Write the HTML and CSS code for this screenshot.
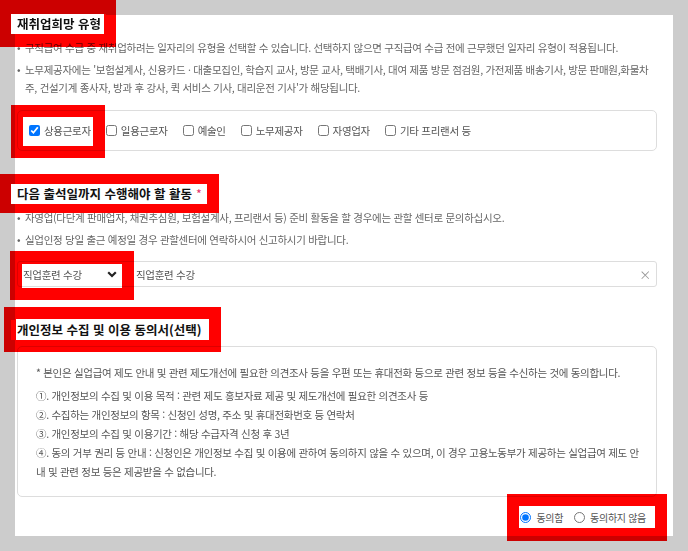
FILE: index.html
```html
<!DOCTYPE html>
<html lang="ko">
<head>
    <meta charset="UTF-8">
    <meta name="viewport" content="width=device-width, initial-scale=1.0">
    <title>재취업희망 유형</title>
    <link rel="stylesheet" href="styles.css">
</head>
<body>
    <div class="panel">
        <h2 class="sect-title hl hl-type">재취업희망 유형</h2>
        <ul class="notes">
            <li>구직급여 수급 중 재취업하려는 일자리의 유형을 선택할 수 있습니다. 선택하지 않으면 구직급여 수급 전에 근무했던 일자리 유형이 적용됩니다.</li>
            <li>노무제공자에는 '보험설계사, 신용카드 · 대출모집인, 학습지 교사, 방문 교사, 택배기사, 대여 제품 방문 점검원, 가전제품 배송기사, 방문 판매원,화물차주, 건설기계 종사자, 방과 후 강사, 퀵 서비스 기사, 대리운전 기사'가 해당됩니다.</li>
        </ul>
        <div class="check-box">
            <label class="check hl hl-check"><input type="checkbox" checked>상용근로자</label>
            <label class="check"><input type="checkbox">일용근로자</label>
            <label class="check"><input type="checkbox">예술인</label>
            <label class="check"><input type="checkbox">노무제공자</label>
            <label class="check"><input type="checkbox">자영업자</label>
            <label class="check"><input type="checkbox">기타 프리랜서 등</label>
        </div>

        <h2 class="sect-title sect-gap hl hl-activity">다음 출석일까지 수행해야 할 활동<span class="req">*</span></h2>
        <ul class="notes">
            <li>자영업(다단계 판매업자, 채권추심원, 보험설계사, 프리랜서 등) 준비 활동을 할 경우에는 관할 센터로 문의하십시오.</li>
            <li>실업인정 당일 출근 예정일 경우 관할센터에 연락하시어 신고하시기 바랍니다.</li>
        </ul>
        <div class="field">
            <div class="select hl hl-select">
                <span>직업훈련 수강</span>
                <svg width="10" height="7" viewBox="0 0 10 7"><path d="M1.2 1.2L5 5l3.8-3.8" fill="none" stroke="#222" stroke-width="2.2"/></svg>
            </div>
            <div class="field-input">
                <span>직업훈련 수강</span>
                <span class="clear">×</span>
            </div>
        </div>

        <h2 class="sect-title sect-gap hl hl-consent">개인정보 수집 및 이용 동의서(선택)</h2>
        <div class="consent">
            <p>* 본인은 실업급여 제도 안내 및 관련 제도개선에 필요한 의견조사 등을 우편 또는 휴대전화 등으로 관련 정보 등을 수신하는 것에 동의합니다.</p>
            <ol class="terms">
                <li>①. 개인정보의 수집 및 이용 목적 : 관련 제도 홍보자료 제공 및 제도개선에 필요한 의견조사 등</li>
                <li>②. 수집하는 개인정보의 항목 : 신청인 성명, 주소 및 휴대전화번호 등 연락처</li>
                <li>③. 개인정보의 수집 및 이용기간 : 해당 수급자격 신청 후 3년</li>
                <li>④. 동의 거부 권리 등 안내 : 신청인은 개인정보 수집 및 이용에 관하여 동의하지 않을 수 있으며, 이 경우 고용노동부가 제공하는 실업급여 제도 안내 및 관련 정보 등은 제공받을 수 없습니다.</li>
            </ol>
        </div>
        <div class="agree-row">
            <div class="radios hl hl-radio">
                <label class="radio"><input type="radio" name="agree" checked>동의함</label>
                <label class="radio"><input type="radio" name="agree">동의하지 않음</label>
            </div>
        </div>
    </div>
</body>
</html>
```

FILE: styles.css
```css
*{
    margin: 0;
    padding: 0;
    box-sizing: border-box;
}
html{
    background-color: #ccc;
}
body{
    background-color: #ccc;
    padding: 15px;
    font-family: "Noto Sans CJK KR", "Noto Sans", sans-serif;
    font-size: 10.5px;
    letter-spacing: -0.3px;
    color: #666;
}
.panel{
    display: flow-root;
    background-color: #fff;
    height: 521px;
    padding: 0 16px 0 2px;
}

/* headings */
.sect-title{
    width: fit-content;
    margin: -1px 0 0 -6px;
    padding: 0 5px 0 6px;
    background-color: #fff;
    font-size: 12.5px;
    font-weight: bold;
    line-height: 20px;
    letter-spacing: 0;
    color: #111;
}
.sect-gap{
    margin-top: 33px;
}
.req{
    color: #e5336b;
    margin-left: 4px;
    font-weight: normal;
}

/* red marks drawn over the screenshot */
.hl{
    position: relative;
}
.hl::before{
    content: "";
    position: absolute;
    inset: -12px;
    border: 12px solid #f00;
    mix-blend-mode: multiply;
    pointer-events: none;
}
.hl-type::before{
    inset: -14px -10px -13px -11px;
    border-width: 14px 12px 13px 11px;
}
.hl-activity::before{
    inset: -10px -12px -9px -11px;
    border-width: 10px 12px 9px 11px;
}
.hl-consent::before{
    inset: -13px -15px -12px -7px;
}
.hl-check::before{
    inset: -16px -14px -17px -18px;
}
.hl-select::before{
    inset: -11px -5px -14px -8px;
    border-width: 13px 12px 12px 12px;
}

/* notes */
.notes{
    list-style: none;
    margin-top: 5px;
}
.notes li{
    line-height: 18px;
    padding-left: 8px;
    text-indent: -8px;
}
.notes li + li{
    margin-top: 4px;
}
.notes li::before{
    content: "•";
    display: inline-block;
    width: 8px;
    text-indent: 0;
}

/* checkbox group */
.check-box{
    display: flex;
    align-items: center;
    gap: 15px;
    height: 41px;
    margin-top: 13px;
    padding: 0 11px;
    border: 1px solid #ddd;
    border-radius: 5px;
}
.check, .radio{
    display: flex;
    align-items: center;
    gap: 4px;
    height: 20px;
    color: #555;
}
.check input, .radio input{
    width: 11px;
    height: 11px;
    margin: 0;
}

/* select + input */
.field{
    display: flex;
    height: 26px;
    margin-top: 12px;
    border: 1px solid #ddd;
    border-radius: 3px;
    color: #555;
}
.select{
    width: 111px;
    display: flex;
    align-items: center;
    justify-content: space-between;
    padding: 0 12px 0 5px;
}
.field-input{
    flex: 1;
    display: flex;
    align-items: center;
    justify-content: space-between;
    padding: 0 5px 0 7px;
}
.clear{
    color: #999;
    font-size: 12px;
}

/* consent */
.consent{
    height: 151px;
    margin-top: 6px;
    padding: 16px 14px 0 18px;
    border: 1px solid #ddd;
    border-radius: 5px;
    line-height: 19px;
    color: #555;
}
.terms{
    list-style: none;
    margin-top: 4px;
}
.agree-row{
    display: flex;
    justify-content: flex-end;
    margin-top: 9px;
    padding-right: 2px;
}
.radios{
    display: flex;
    align-items: center;
    gap: 11px;
    height: 22px;
    padding: 0 9px 0 1px;
    background-color: #fff;
}
.radio{
    gap: 5px;
    font-size: 10px;
}
.hl-radio::before{
    inset: -12px -12px -13px -12px;
    border-width: 12px 12px 13px 12px;
}
```
